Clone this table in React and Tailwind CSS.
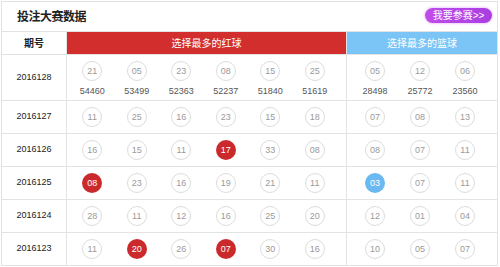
const rows = [
  {
    period: "2016128",
    red: ["21", "05", "23", "08", "15", "25"],
    redCount: ["54460", "53499", "52363", "52237", "51840", "51619"],
    blue: ["05", "12", "06"],
    blueCount: ["28498", "25772", "23560"],
  },
  { period: "2016127", red: ["11", "25", "16", "23", "15", "18"], blue: ["07", "08", "13"] },
  { period: "2016126", red: ["16", "15", "11", "17", "33", "08"], blue: ["08", "07", "11"], hitRed: [3] },
  { period: "2016125", red: ["08", "23", "16", "19", "21", "11"], blue: ["03", "07", "11"], hitRed: [0], hitBlue: [0] },
  { period: "2016124", red: ["28", "11", "12", "16", "25", "20"], blue: ["12", "01", "04"] },
  { period: "2016123", red: ["11", "20", "26", "07", "30", "16"], blue: ["10", "05", "07"], hitRed: [1, 3] },
];

function Ball({ n, hit }) {
  let cls = "border border-[#dcdcdc] text-[#9a9a9a] bg-white";
  if (hit === "red") cls = "bg-[#cb2a2c] text-white";
  if (hit === "blue") cls = "bg-[#6ab9f1] text-white";
  return (
    <div
      className={`w-[20px] h-[20px] rounded-full flex items-center justify-center text-[9px] leading-none ${cls}`}
    >
      {n}
    </div>
  );
}

function Cell({ n, count, hit, w }) {
  return (
    <div className={`${w} flex flex-col items-center`}>
      <Ball n={n} hit={hit} />
      {count && <div className="mt-[4px] text-[9px] leading-[12px] text-[#555]">{count}</div>}
    </div>
  );
}

export default function App() {
  return (
    <div
      className="w-[500px] h-[267px] bg-white pl-px pt-px overflow-hidden"
      style={{ fontFamily: '"Liberation Sans", "Noto Sans CJK SC", sans-serif' }}
    >
      <div className="w-[497px] border border-[#e3e3e3] border-b-0">
        {/* title */}
        <div className="h-[30px] flex items-center justify-between pl-[15px] pr-[5px] border-b border-[#e3e3e3]">
          <div className="text-[12px] font-bold text-[#222] tracking-[-0.5px]">投注大赛数据</div>
          <div className="h-[15px] w-[67px] mt-[-2px] rounded-full bg-gradient-to-r from-[#c04ce8] to-[#a93ee0] shadow-[0_0_3px_#e39af5] flex items-center justify-center text-[10px] text-white leading-none">
            我要参赛&gt;&gt;
          </div>
        </div>

        {/* header */}
        <div className="flex h-[23px] border-b border-[#e3e3e3]">
          <div className="w-[65px] border-r border-[#e3e3e3] flex items-center justify-center text-[10px] font-bold text-[#222]">
            期号
          </div>
          <div className="w-[279px] bg-[#d22e2e] flex items-center justify-center text-[10px] text-white">
            选择最多的红球
          </div>
          <div className="flex-1 border-l border-[#e3e3e3] bg-[#7ac4f6] flex items-center justify-center text-[10px] text-white">
            选择最多的篮球
          </div>
        </div>

        {/* rows */}
        {rows.map((r, i) => (
          <div
            key={r.period}
            className={`flex border-b border-[#e3e3e3] ${i === 0 ? "h-[46px]" : "h-[33px]"}`}
          >
            <div className="w-[65px] border-r border-[#e3e3e3] flex items-center justify-center text-[9px] text-[#222]">
              {r.period}
            </div>
            <div className={`w-[279px] flex pl-[3px] ${i === 0 ? "pt-[6px]" : "items-center"}`}>
              {r.red.map((n, j) => (
                <Cell
                  key={j}
                  w="w-[44.5px]"
                  n={n}
                  count={r.redCount && r.redCount[j]}
                  hit={r.hitRed && r.hitRed.includes(j) ? "red" : null}
                />
              ))}
            </div>
            <div className={`flex-1 border-l border-[#e3e3e3] flex pl-[5.5px] ${i === 0 ? "pt-[6px]" : "items-center"}`}>
              {r.blue.map((n, j) => (
                <Cell
                  key={j}
                  w="w-[45px]"
                  n={n}
                  count={r.blueCount && r.blueCount[j]}
                  hit={r.hitBlue && r.hitBlue.includes(j) ? "blue" : null}
                />
              ))}
            </div>
          </div>
        ))}
      </div>
    </div>
  );
}
